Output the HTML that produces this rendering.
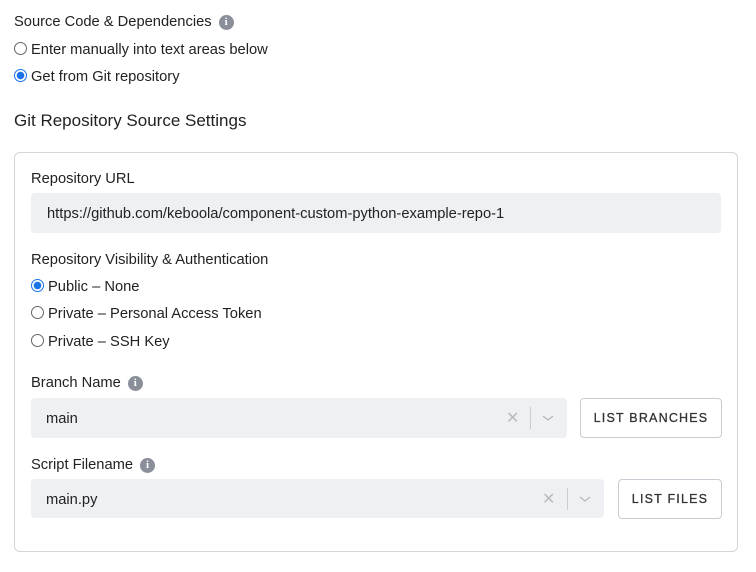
<!DOCTYPE html>
<html><head><style>
body{margin:0;width:756px;height:572px;background:#fff;font-family:"Liberation Sans",sans-serif;color:#222;font-size:14.7px;position:relative;overflow:hidden}
.a{position:absolute;white-space:nowrap;line-height:20px}
.r{position:absolute;width:11px;height:11px;border:1px solid #666;border-radius:50%;background:#fff}
.r.on{border:1px solid #1a73e8;background:radial-gradient(circle,#1a73e8 0 3.5px,#fff 4px)}
.i{display:inline-block;width:15px;height:15px;border-radius:50%;background:#8a8f99;color:#fff;font-size:11px;font-weight:bold;text-align:center;line-height:15px;vertical-align:1px;margin-left:7px;font-family:"Liberation Serif",serif}
.in{position:absolute;background:#eef0f4;border-radius:4px}
.btn{position:absolute;border:1px solid #c9ccd3;border-radius:4px;background:#fff;font-size:12.5px;letter-spacing:1.2px;text-align:center;color:#333;-webkit-text-stroke:0.3px #333}
.x{position:absolute;color:#bbb;font-size:16px}
.sep{position:absolute;width:1px;height:22px;background:#ccc}
</style></head><body>
<div class="a" style="left:14px;top:12px">Source Code &amp; Dependencies<span class="i">i</span></div>
<div class="r" style="left:14px;top:42px"></div><div class="a" style="left:31px;top:40px">Enter manually into text areas below</div>
<div class="r on" style="left:14px;top:69px"></div><div class="a" style="left:31px;top:67px">Get from Git repository</div>
<div class="a" style="left:14px;top:110px;font-size:17px;line-height:21px">Git Repository Source Settings</div>
<div style="position:absolute;left:14px;top:152px;width:722px;height:398px;border:1px solid #d3d5da;border-radius:6px"></div>
<div class="a" style="left:31px;top:169px">Repository URL</div>
<div class="in" style="left:31px;top:193px;width:690px;height:40px"></div>
<div class="a" style="left:47px;top:204px">https://github.com/keboola/component-custom-python-example-repo-1</div>
<div class="a" style="left:31px;top:250px">Repository Visibility &amp; Authentication</div>
<div class="r on" style="left:31px;top:279px"></div><div class="a" style="left:48px;top:277px">Public – None</div>
<div class="r" style="left:31px;top:306px"></div><div class="a" style="left:48px;top:304px">Private – Personal Access Token</div>
<div class="r" style="left:31px;top:334px"></div><div class="a" style="left:48px;top:332px">Private – SSH Key</div>
<div class="a" style="left:31px;top:373px">Branch Name<span class="i">i</span></div>
<div class="in" style="left:31px;top:398px;width:536px;height:40px"></div>
<div class="a" style="left:46px;top:409px">main</div>
<div class="x" style="left:506px;top:408px">✕</div><div class="sep" style="left:530px;top:407px"></div>
<svg style="position:absolute;left:542px;top:414px" width="12" height="8"><path d="M1 2l5 4 5-4" stroke="#aaa" fill="none"/></svg>
<div class="btn" style="left:580px;top:398px;width:140px;height:38px;line-height:38px">LIST BRANCHES</div>
<div class="a" style="left:31px;top:455px">Script Filename<span class="i">i</span></div>
<div class="in" style="left:31px;top:479px;width:573px;height:39px"></div>
<div class="a" style="left:46px;top:490px">main.py</div>
<div class="x" style="left:542px;top:489px">✕</div><div class="sep" style="left:567px;top:488px"></div>
<svg style="position:absolute;left:579px;top:495px" width="12" height="8"><path d="M1 2l5 4 5-4" stroke="#aaa" fill="none"/></svg>
<div class="btn" style="left:618px;top:479px;width:102px;height:38px;line-height:38px">LIST FILES</div>
</body></html>
